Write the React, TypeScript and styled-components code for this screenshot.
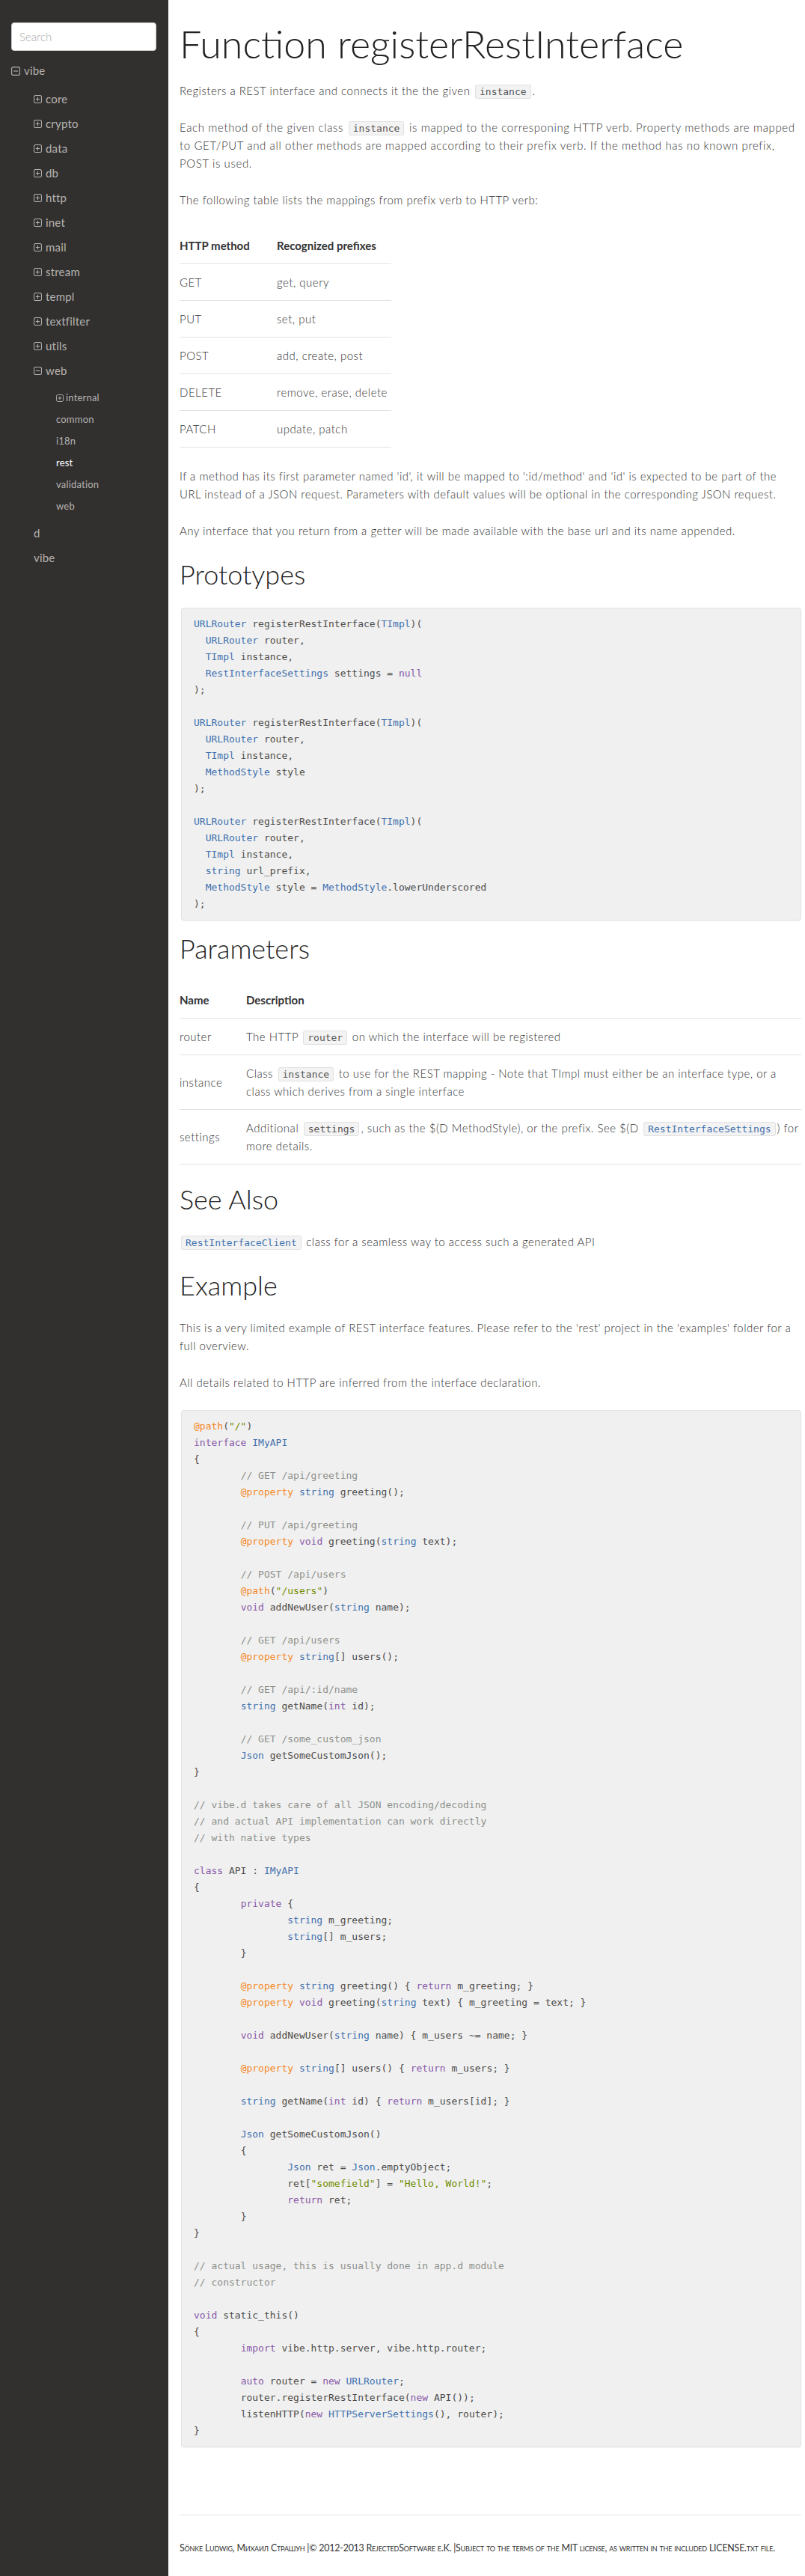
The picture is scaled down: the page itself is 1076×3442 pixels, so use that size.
import React from "react";
import styled, { createGlobalStyle } from "styled-components";

const Global = createGlobalStyle`
  html, body { margin: 0; padding: 0; background: #fff; }
  * { box-sizing: border-box; }
`;

const SANS = `Lato, "Open Sans", "DejaVu Sans", sans-serif`;
const MONO = `"DejaVu Sans Mono", "Liberation Mono", monospace`;

const Layout = styled.div`
  display: flex;
  min-height: 100vh;
  align-items: stretch;
`;

const Sidebar = styled.nav`
  flex: 0 0 225px;
  width: 225px;
  background: #32302f;
  padding: 30px 16px 0 15px;
  font-family: ${SANS};
  color: #b4b2b0;
`;

const Search = styled.input`
  display: block;
  width: 194px;
  height: 38px;
  border: 1px solid #ccc;
  border-radius: 4px;
  background: #fff;
  padding: 0 10px;
  font-family: ${SANS};
  font-size: 15px;
  font-weight: 300;
  color: #555;
  outline: none;
  &::placeholder { color: #a9a9a9; }
`;

const Tree = styled.ul<{ $indent?: number; $top?: number }>`
  list-style: none;
  margin: ${(p) => p.$top ?? 0}px 0 0 0;
  padding: 5px 0 5px ${(p) => p.$indent ?? 0}px;
`;

const Item = styled.li``;

const Row = styled.div<{ $h: number; $size: number; $gap: number; $current?: boolean }>`
  display: flex;
  align-items: center;
  gap: ${(p) => p.$gap}px;
  height: ${(p) => p.$h}px;
  line-height: ${(p) => p.$h}px;
  font-size: ${(p) => p.$size}px;
  font-weight: 400;
  color: ${(p) => (p.$current ? "#ffffff" : "#b4b2b0")};
  letter-spacing: 0.2px;
`;

const Toggle: React.FC<{ open?: boolean; size: number }> = ({ open, size }) => (
  <svg width={size} height={size} viewBox="0 0 12 12" fill="none" stroke="#b4b2b0" strokeWidth="1.1">
    <rect x="0.6" y="0.6" width="10.8" height="10.8" rx="2.2" />
    <line x1="3" y1="6" x2="9" y2="6" />
    {!open && <line x1="6" y1="3" x2="6" y2="9" />}
  </svg>
);

const Main = styled.main`
  flex: 1 1 auto;
  min-width: 0;
  padding: 0 5px 0 15px;
  font-family: ${SANS};
  font-weight: 300;
  font-size: 15px;
  line-height: 24px;
  letter-spacing: 0.5px;
  color: #333;
`;

const Title = styled.h1`
  margin: 28px 0 21px;
  font-size: 52px;
  line-height: 60px;
  font-weight: 300;
  color: #222;
  letter-spacing: 0;
`;

const H2 = styled.h2<{ $tight?: boolean }>`
  margin: ${(p) => (p.$tight ? 17 : 26)}px 0 25px;
  font-size: 36px;
  line-height: 40px;
  font-weight: 300;
  color: #222;
  letter-spacing: 0;
`;

const P = styled.p<{ $ls?: number }>`
  margin: 0 0 25px;
  ${(p) => (p.$ls !== undefined ? `letter-spacing: ${p.$ls}px;` : "")}
`;

const Chip = styled.code<{ $link?: boolean }>`
  font-family: ${MONO};
  font-size: 13px;
  line-height: 20px;
  letter-spacing: 0;
  padding: 1px 5px;
  margin: 0 2px;
  border: 1px solid #e1e1e1;
  border-radius: 3px;
  background: #f3f3f3;
  color: ${(p) => (p.$link ? "#4271ae" : "#555")};
`;

const Table = styled.table<{ $width?: string }>`
  border-collapse: collapse;
  width: ${(p) => p.$width ?? "100%"};
  margin: 0 0 26px;
`;

const Th = styled.th<{ $w?: number }>`
  text-align: left;
  font-weight: 700;
  padding: 12px 0;
  border-bottom: 1px solid #e3e3e3;
  width: ${(p) => (p.$w ? `${p.$w}px` : "auto")};
  letter-spacing: 0;
  color: #333;
`;

const Td = styled.td`
  padding: 12px 0;
  border-bottom: 1px solid #e3e3e3;
  vertical-align: middle;
`;

const Pre = styled.pre<{ $mb?: number }>`
  margin: 0 0 ${(p) => p.$mb ?? 17}px 2px;
  padding: 10px 16px;
  border: 1px solid #e2e2e2;
  border-radius: 4px;
  background: #f0f0f0;
  box-shadow: 0 1px 1px rgba(0, 0, 0, 0.04);
  font-family: ${MONO};
  font-size: 13px;
  line-height: 22px;
  letter-spacing: 0;
  color: #4d4d4c;
  tab-size: 8;
  white-space: pre;
  overflow: hidden;
`;

const TOKEN_COLORS: Record<string, string> = {
  t: "#4271ae",
  k: "#8959a8",
  m: "#f5871f",
  s: "#718c00",
  c: "#8e908c",
};

const Tok = styled.span<{ $k: string }>`
  color: ${(p) => TOKEN_COLORS[p.$k] ?? "inherit"};
`;

const Footer = styled.footer`
  margin-top: 90px;
  border-top: 1px solid #e3e3e3;
  padding: 32px 0 25px;
  font-variant: small-caps;
  font-size: 12.4px;
  font-weight: 400;
  line-height: 24px;
  color: #333;
  letter-spacing: -0.2px;
`;

function tokens(line: string) {
  const out: React.ReactNode[] = [];
  const re = /«(\w)\|([^»]*)»/g;
  let last = 0;
  let m: RegExpExecArray | null;
  let i = 0;
  while ((m = re.exec(line))) {
    if (m.index > last) out.push(line.slice(last, m.index));
    out.push(
      <Tok key={i++} $k={m[1]}>
        {m[2]}
      </Tok>
    );
    last = m.index + m[0].length;
  }
  if (last < line.length) out.push(line.slice(last));
  return out;
}

const CodeBlock: React.FC<{ code: string; mb?: number }> = ({ code, mb }) => {
  const lines = code.split("\n");
  return (
    <Pre $mb={mb}>
      {lines.map((l, i) => (
        <React.Fragment key={i}>
          {tokens(l)}
          {i < lines.length - 1 ? "\n" : null}
        </React.Fragment>
      ))}
    </Pre>
  );
};

const PROTOTYPES = [
  "«t|URLRouter» registerRestInterface(«t|TImpl»)(",
  "  «t|URLRouter» router,",
  "  «t|TImpl» instance,",
  "  «t|RestInterfaceSettings» settings = «k|null»",
  ");",
  "",
  "«t|URLRouter» registerRestInterface(«t|TImpl»)(",
  "  «t|URLRouter» router,",
  "  «t|TImpl» instance,",
  "  «t|MethodStyle» style",
  ");",
  "",
  "«t|URLRouter» registerRestInterface(«t|TImpl»)(",
  "  «t|URLRouter» router,",
  "  «t|TImpl» instance,",
  "  «t|string» url_prefix,",
  "  «t|MethodStyle» style = «t|MethodStyle».lowerUnderscored",
  ");",
].join("\n");

const EXAMPLE = [
  '«m|@path»(«s|"/"»)',
  "«k|interface» «t|IMyAPI»",
  "{",
  "\t«c|// GET /api/greeting»",
  "\t«m|@property» «t|string» greeting();",
  "",
  "\t«c|// PUT /api/greeting»",
  "\t«m|@property» «k|void» greeting(«t|string» text);",
  "",
  "\t«c|// POST /api/users»",
  '\t«m|@path»(«s|"/users"»)',
  "\t«k|void» addNewUser(«t|string» name);",
  "",
  "\t«c|// GET /api/users»",
  "\t«m|@property» «t|string»[] users();",
  "",
  "\t«c|// GET /api/:id/name»",
  "\t«t|string» getName(«k|int» id);",
  "",
  "\t«c|// GET /some_custom_json»",
  "\t«t|Json» getSomeCustomJson();",
  "}",
  "",
  "«c|// vibe.d takes care of all JSON encoding/decoding»",
  "«c|// and actual API implementation can work directly»",
  "«c|// with native types»",
  "",
  "«k|class» API : «t|IMyAPI»",
  "{",
  "\t«k|private» {",
  "\t\t«t|string» m_greeting;",
  "\t\t«t|string»[] m_users;",
  "\t}",
  "",
  "\t«m|@property» «t|string» greeting() { «k|return» m_greeting; }",
  "\t«m|@property» «k|void» greeting(«t|string» text) { m_greeting = text; }",
  "",
  "\t«k|void» addNewUser(«t|string» name) { m_users ~= name; }",
  "",
  "\t«m|@property» «t|string»[] users() { «k|return» m_users; }",
  "",
  "\t«t|string» getName(«k|int» id) { «k|return» m_users[id]; }",
  "",
  "\t«t|Json» getSomeCustomJson()",
  "\t{",
  "\t\t«t|Json» ret = «t|Json».emptyObject;",
  '\t\tret[«s|"somefield"»] = «s|"Hello, World!"»;',
  "\t\t«k|return» ret;",
  "\t}",
  "}",
  "",
  "«c|// actual usage, this is usually done in app.d module»",
  "«c|// constructor»",
  "",
  "«k|void» static_this()",
  "{",
  "\t«k|import» vibe.http.server, vibe.http.router;",
  "",
  "\t«k|auto» router = «k|new» «t|URLRouter»;",
  "\trouter.registerRestInterface(«k|new» API());",
  "\tlistenHTTP(«k|new» «t|HTTPServerSettings»(), router);",
  "}",
].join("\n");

const LEVEL1 = ["core", "crypto", "data", "db", "http", "inet", "mail", "stream", "templ", "textfilter", "utils"];
const WEB_CHILDREN = ["common", "i18n", "rest", "validation", "web"];

const PREFIXES: [string, string][] = [
  ["GET", "get, query"],
  ["PUT", "set, put"],
  ["POST", "add, create, post"],
  ["DELETE", "remove, erase, delete"],
  ["PATCH", "update, patch"],
];

export default function App() {
  return (
    <>
      <Global />
      <Layout>
        <Sidebar>
          <Search placeholder="Search" />
          <Tree $top={5}>
            <Item>
              <Row $h={33} $size={15} $gap={5}>
                <Toggle open size={12} />
                vibe
              </Row>
              <Tree $indent={30}>
                {LEVEL1.map((n) => (
                  <Item key={n}>
                    <Row $h={33} $size={15} $gap={5}>
                      <Toggle size={11} />
                      {n}
                    </Row>
                  </Item>
                ))}
                <Item>
                  <Row $h={33} $size={15} $gap={5}>
                    <Toggle open size={11} />
                    web
                  </Row>
                  <Tree $indent={30}>
                    <Item>
                      <Row $h={29} $size={13} $gap={3}>
                        <Toggle size={10} />
                        internal
                      </Row>
                    </Item>
                    {WEB_CHILDREN.map((n) => (
                      <Item key={n}>
                        <Row $h={29} $size={13} $gap={3} $current={n === "rest"}>
                          {n}
                        </Row>
                      </Item>
                    ))}
                  </Tree>
                </Item>
                <Item>
                  <Row $h={33} $size={15} $gap={5}>d</Row>
                </Item>
                <Item>
                  <Row $h={33} $size={15} $gap={5}>vibe</Row>
                </Item>
              </Tree>
            </Item>
          </Tree>
        </Sidebar>

        <Main>
          <Title>Function registerRestInterface</Title>
          <P>
            Registers a REST interface and connects it the the given <Chip>instance</Chip>.
          </P>
          <P $ls={0.62}>
            Each method of the given class <Chip>instance</Chip> is mapped to the corresponing HTTP verb. Property
            methods are mapped to GET/PUT and all other methods are mapped according to their prefix verb. If the
            method has no known prefix, POST is used.
          </P>
          <P>The following table lists the mappings from prefix verb to HTTP verb:</P>
          <Table $width="283px">
            <thead>
              <tr>
                <Th $w={130}>HTTP method</Th>
                <Th>Recognized prefixes</Th>
              </tr>
            </thead>
            <tbody>
              {PREFIXES.map(([m, p]) => (
                <tr key={m}>
                  <Td>{m}</Td>
                  <Td>{p}</Td>
                </tr>
              ))}
            </tbody>
          </Table>
          <P>
            If a method has its first parameter named 'id', it will be mapped to ':id/method' and 'id' is expected
            to be part of the URL instead of a JSON request. Parameters with default values will be optional in the
            corresponding JSON request.
          </P>
          <P>Any interface that you return from a getter will be made available with the base url and its name appended.</P>

          <H2>Prototypes</H2>
          <CodeBlock code={PROTOTYPES} />

          <H2 $tight>Parameters</H2>
          <Table>
            <thead>
              <tr>
                <Th $w={89}>Name</Th>
                <Th>Description</Th>
              </tr>
            </thead>
            <tbody>
              <tr>
                <Td>router</Td>
                <Td>
                  The HTTP <Chip>router</Chip> on which the interface will be registered
                </Td>
              </tr>
              <tr>
                <Td>instance</Td>
                <Td>
                  Class <Chip>instance</Chip> to use for the REST mapping - Note that TImpl must either be an
                  interface type, or a class which derives from a single interface
                </Td>
              </tr>
              <tr>
                <Td>settings</Td>
                <Td>
                  Additional <Chip>settings</Chip>, such as the $(D MethodStyle), or the prefix. See $(D{" "}
                  <Chip $link>RestInterfaceSettings</Chip>) for more details.
                </Td>
              </tr>
            </tbody>
          </Table>

          <H2>See Also</H2>
          <P>
            <Chip $link>RestInterfaceClient</Chip> class for a seamless way to access such a generated API
          </P>

          <H2>Example</H2>
          <P>
            This is a very limited example of REST interface features. Please refer to the 'rest' project in the
            'examples' folder for a full overview.
          </P>
          <P>All details related to HTTP are inferred from the interface declaration.</P>
          <CodeBlock code={EXAMPLE} />

          <Footer>
            Sönke Ludwig, Михаил Страшун |© 2012-2013 RejectedSoftware e.K. |Subject to the terms of the MIT
            license, as written in the included LICENSE.txt file.
          </Footer>
        </Main>
      </Layout>
    </>
  );
}
